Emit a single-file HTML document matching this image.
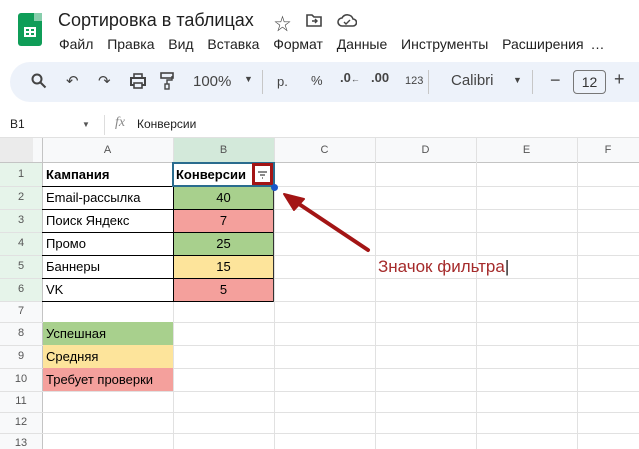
<!DOCTYPE html>
<html><head><meta charset="utf-8"><style>
*{margin:0;padding:0;box-sizing:border-box}
body{width:639px;height:449px;overflow:hidden;background:#fff;font-family:"Liberation Sans","Noto Sans CJK SC",sans-serif;position:relative;color:#1f1f1f}
.a{position:absolute;white-space:nowrap}
.tb{position:absolute;left:10px;top:62px;width:660px;height:40px;background:#edf2fa;border-radius:20px}
.ti{position:absolute;top:72px;font-size:15px;color:#444}
.g{position:absolute;background:#e1e1e1}
.c{position:absolute;font-size:13px;line-height:23px;padding-left:4px;color:#000}
.rn{position:absolute;left:0;width:42px;text-align:center;font-size:11px;color:#555}
.ch{position:absolute;top:138px;height:24px;line-height:24px;text-align:center;font-size:11px;color:#555}
</style></head><body>
<!-- logo -->
<div class="a" style="left:18px;top:13px;width:24px;height:33px;background:#0f9d58;border-radius:3px"></div>
<div class="a" style="left:34px;top:13px;width:8px;height:8px;background:#87ceac"></div>
<div class="a" style="left:24px;top:27px;width:12px;height:10px;border:2px solid #fff"></div>
<div class="a" style="left:29px;top:27px;width:2px;height:10px;background:#fff"></div>
<div class="a" style="left:24px;top:31px;width:12px;height:2px;background:#fff"></div>
<div class="a" style="left:58px;top:10px;font-size:18px">Сортировка в таблицах</div>
<div class="a" style="left:274px;top:10px;font-size:17px;color:#444">☆</div>
<svg class="a" style="left:306px;top:13px" width="16" height="14"><path d="M1 2h5l2 2h7v9H1z" fill="none" stroke="#444" stroke-width="1.6"/><path d="M6 8h5M9 6l2 2-2 2" stroke="#444" fill="none" stroke-width="1.4"/></svg>
<svg class="a" style="left:337px;top:13px" width="20" height="14"><path d="M5 13a4 4 0 010-8 6 6 0 0111 1 3.5 3.5 0 010 7z" fill="none" stroke="#444" stroke-width="1.6"/><path d="M7 9l2 2 4-4" stroke="#444" fill="none" stroke-width="1.4"/></svg>
<div class="a" style="left:59px;top:36px;font-size:14px;word-spacing:3px">Файл&nbsp; Правка&nbsp; Вид&nbsp; Вставка&nbsp; Формат&nbsp; Данные&nbsp; Инструменты&nbsp; Расширения …</div>
<div class="tb"></div>
<svg class="a" style="left:31px;top:73px" width="16" height="16"><circle cx="6" cy="6" r="4.5" fill="none" stroke="#444" stroke-width="2"/><path d="M9.5 9.5l5 5" stroke="#444" stroke-width="2"/></svg>
<div class="ti" style="left:66px">↶</div><div class="ti" style="left:98px">↷</div>
<svg class="a" style="left:130px;top:73px" width="16" height="16"><rect x="1" y="5" width="14" height="7" fill="none" stroke="#444" stroke-width="2"/><rect x="4" y="1" width="8" height="4" fill="none" stroke="#444" stroke-width="1.6"/><rect x="4" y="10" width="8" height="5" fill="#edf2fa" stroke="#444" stroke-width="1.6"/></svg>
<svg class="a" style="left:160px;top:72px" width="14" height="18"><rect x="1" y="1" width="12" height="5" fill="none" stroke="#444" stroke-width="1.6"/><path d="M12 4v4H7v4" fill="none" stroke="#444" stroke-width="1.4"/><rect x="5" y="12" width="4" height="5" fill="none" stroke="#444" stroke-width="1.4"/></svg>
<div class="ti" style="left:193px;top:73px;font-size:15px">100%</div>
<div class="ti" style="left:244px;top:74px;font-size:9px">▼</div>
<div class="a" style="left:262px;top:70px;width:1px;height:24px;background:#c7c7c7"></div>
<div class="ti" style="left:277px;top:74px;font-size:13px">р.</div>
<div class="ti" style="left:311px;top:73px;font-size:13px">%</div>
<div class="ti" style="left:340px;top:70px;font-size:13px;font-weight:bold">.0<span style="font-size:9px">←</span></div>
<div class="ti" style="left:371px;top:70px;font-size:13px;font-weight:bold">.00<span style="font-size:9px"></span></div>
<div class="ti" style="left:405px;top:75px;font-size:11px">123</div>
<div class="a" style="left:428px;top:70px;width:1px;height:24px;background:#c7c7c7"></div>
<div class="ti" style="left:451px;top:72px;font-size:15px">Calibri</div>
<div class="ti" style="left:513px;top:75px;font-size:9px">▼</div>
<div class="a" style="left:532px;top:70px;width:1px;height:24px;background:#c7c7c7"></div>
<div class="ti" style="left:550px;top:70px;font-size:18px">−</div>
<div class="a" style="left:573px;top:70px;width:33px;height:24px;border:1px solid #777;border-radius:4px;text-align:center;line-height:22px;font-size:14px;color:#333">12</div>
<div class="ti" style="left:614px;top:69px;font-size:18px">+</div>
<!-- formula bar -->
<div class="a" style="left:10px;top:117px;font-size:12px">B1</div>
<div class="a" style="left:82px;top:120px;font-size:8px;color:#555">▼</div>
<div class="a" style="left:104px;top:115px;width:1px;height:20px;background:#ddd"></div>
<div class="a" style="left:115px;top:115px;font-size:14px;font-style:italic;font-family:'Liberation Serif',serif;color:#888">fx</div>
<div class="a" style="left:137px;top:117px;font-size:12px">Конверсии</div>
<!-- headers -->
<div class="a" style="left:0;top:138px;width:639px;height:24px;background:#f8f9fa"></div>
<div class="a" style="left:0;top:138px;width:42px;height:311px;background:#f8f9fa"></div>
<div class="a" style="left:0;top:138px;width:33px;height:24px;background:#ebebeb"></div>
<div class="a" style="left:173px;top:138px;width:101px;height:24px;background:#d3e9da"></div>
<div class="a" style="left:0;top:162px;width:42px;height:139px;background:#e6f4ea"></div>
<div class="g" style="left:0;top:137px;width:639px;height:1px"></div>
<div class="g" style="left:0;top:162px;width:639px;height:1px;background:#c4c4c4"></div>
<div class="g" style="left:42px;top:138px;width:1px;height:311px;background:#c4c4c4"></div>
<div class="ch" style="left:42px;width:131px">A</div>
<div class="ch" style="left:173px;width:101px">B</div>
<div class="ch" style="left:274px;width:101px">C</div>
<div class="ch" style="left:375px;width:101px">D</div>
<div class="ch" style="left:476px;width:101px">E</div>
<div class="ch" style="left:577px;width:62px">F</div>
<!-- grid verticals -->
<div class="g" style="left:173px;top:138px;width:1px;height:311px"></div>
<div class="g" style="left:274px;top:138px;width:1px;height:311px"></div>
<div class="g" style="left:375px;top:138px;width:1px;height:311px"></div>
<div class="g" style="left:476px;top:138px;width:1px;height:311px"></div>
<div class="g" style="left:577px;top:138px;width:1px;height:311px"></div>
<!-- row horizontals -->
<div class="g" style="left:0;top:186px;width:639px;height:1px"></div>
<div class="g" style="left:0;top:209px;width:639px;height:1px"></div>
<div class="g" style="left:0;top:232px;width:639px;height:1px"></div>
<div class="g" style="left:0;top:255px;width:639px;height:1px"></div>
<div class="g" style="left:0;top:278px;width:639px;height:1px"></div>
<div class="g" style="left:0;top:301px;width:639px;height:1px"></div>
<div class="g" style="left:0;top:322px;width:639px;height:1px"></div>
<div class="g" style="left:0;top:345px;width:639px;height:1px"></div>
<div class="g" style="left:0;top:368px;width:639px;height:1px"></div>
<div class="g" style="left:0;top:391px;width:639px;height:1px"></div>
<div class="g" style="left:0;top:412px;width:639px;height:1px"></div>
<div class="g" style="left:0;top:433px;width:639px;height:1px"></div>
<!-- row numbers -->
<div class="rn" style="top:168px">1</div><div class="rn" style="top:191px">2</div><div class="rn" style="top:214px">3</div><div class="rn" style="top:237px">4</div><div class="rn" style="top:260px">5</div><div class="rn" style="top:283px">6</div><div class="rn" style="top:305px">7</div><div class="rn" style="top:327px">8</div><div class="rn" style="top:350px">9</div><div class="rn" style="top:373px">10</div><div class="rn" style="top:395px">11</div><div class="rn" style="top:416px">12</div><div class="rn" style="top:437px">13</div>
<!-- colored cells -->
<div class="a" style="left:173px;top:186px;width:101px;height:23px;background:#a8d08d"></div>
<div class="a" style="left:173px;top:209px;width:101px;height:23px;background:#f4a09c"></div>
<div class="a" style="left:173px;top:232px;width:101px;height:23px;background:#a8d08d"></div>
<div class="a" style="left:173px;top:255px;width:101px;height:23px;background:#fde49b"></div>
<div class="a" style="left:173px;top:278px;width:101px;height:23px;background:#f4a09c"></div>
<div class="a" style="left:43px;top:322px;width:130px;height:23px;background:#a8d08d"></div>
<div class="a" style="left:43px;top:345px;width:130px;height:23px;background:#fde49b"></div>
<div class="a" style="left:43px;top:368px;width:130px;height:23px;background:#f4a09c"></div>
<!-- table borders -->
<div class="a" style="left:42px;top:186px;width:232px;height:1px;background:#000"></div>
<div class="a" style="left:42px;top:209px;width:232px;height:1px;background:#000"></div>
<div class="a" style="left:42px;top:232px;width:232px;height:1px;background:#000"></div>
<div class="a" style="left:42px;top:255px;width:232px;height:1px;background:#000"></div>
<div class="a" style="left:42px;top:278px;width:232px;height:1px;background:#000"></div>
<div class="a" style="left:42px;top:301px;width:232px;height:1px;background:#000"></div>
<div class="a" style="left:173px;top:162px;width:1px;height:140px;background:#000"></div>
<div class="a" style="left:273px;top:186px;width:1px;height:116px;background:#333"></div>
<!-- texts -->
<div class="c" style="left:42px;top:163px;font-weight:bold">Кампания</div>
<div class="c" style="left:42px;top:186px">Email-рассылка</div>
<div class="c" style="left:42px;top:209px">Поиск Яндекс</div>
<div class="c" style="left:42px;top:232px">Промо</div>
<div class="c" style="left:42px;top:255px">Баннеры</div>
<div class="c" style="left:42px;top:278px">VK</div>
<div class="c" style="left:42px;top:322px">Успешная</div>
<div class="c" style="left:42px;top:345px">Средняя</div>
<div class="c" style="left:42px;top:368px">Требует проверки</div>
<div class="c" style="left:173px;top:186px;width:101px;text-align:center;padding:0">40</div>
<div class="c" style="left:173px;top:209px;width:101px;text-align:center;padding:0">7</div>
<div class="c" style="left:173px;top:232px;width:101px;text-align:center;padding:0">25</div>
<div class="c" style="left:173px;top:255px;width:101px;text-align:center;padding:0">15</div>
<div class="c" style="left:173px;top:278px;width:101px;text-align:center;padding:0">5</div>
<!-- selected B1 -->
<div class="a" style="left:172px;top:162px;width:103px;height:25px;border:2px solid #1a73e8;border-color:#2a6c8e"></div>
<div class="c" style="left:172px;top:163px;font-weight:bold">Конверсии</div>
<div class="a" style="left:252px;top:163px;width:21px;height:22px;border:3px solid #a31515;background:#fff"></div>
<svg class="a" style="left:257px;top:170px" width="11" height="9"><path d="M1 2h9M3 5h5M5 8h1" stroke="#444" stroke-width="1.2"/></svg>
<div class="a" style="left:271px;top:184px;width:7px;height:7px;border-radius:50%;background:#1a56c8"></div>
<!-- arrow -->
<svg class="a" style="left:280px;top:190px" width="100" height="70"><path d="M88 60L16 12" stroke="#a31515" stroke-width="4" stroke-linecap="round"/><path d="M4 4L24 9L14 20Z" fill="#a31515" stroke="#a31515" stroke-width="2" stroke-linejoin="round"/></svg>
<div class="a" style="left:378px;top:257px;font-size:17px;color:#a52a2a">Значок фильтра<span style="color:#222">|</span></div>
</body></html>
